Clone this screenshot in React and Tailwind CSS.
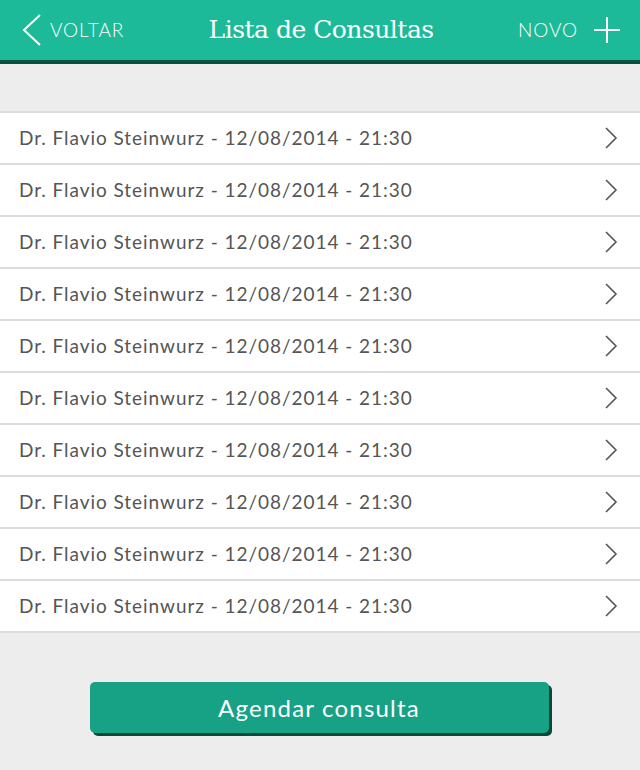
import React from 'react';

const consultas = Array.from({ length: 10 }, (_, i) => ({
  id: i + 1,
  doctor: 'Dr. Flavio Steinwurz',
  date: '12/08/2014',
  time: '21:30',
}));

function ChevronRight() {
  return (
    <svg width="14" height="22" viewBox="0 0 14 22" fill="none" stroke="#555" strokeWidth="1.6">
      <path d="M2 1l10 10L2 21" />
    </svg>
  );
}

export default function App() {
  return (
    <div className="min-h-[770px] bg-[#ededed] font-['Lato',sans-serif]">
      <header className="h-[60px] bg-[#1dba9a] border-b-4 border-[#0a5140] box-content flex items-center justify-between text-white">
        <button className="flex items-center gap-[8px] pl-[20px]">
          <svg width="22" height="32" viewBox="0 0 22 32" fill="none" stroke="white" strokeWidth="2">
            <path d="M20 1L4 16l16 15" />
          </svg>
          <span className="text-[19px] font-light tracking-[0.05em]">VOLTAR</span>
        </button>
        <h1 className="text-[25px] font-['DejaVu_Serif',serif] tracking-[-0.02em]">Lista de Consultas</h1>
        <button className="flex items-center gap-[16px] pr-[20px]">
          <span className="text-[19px] font-light tracking-[0.05em]">NOVO</span>
          <svg width="26" height="26" viewBox="0 0 26 26" stroke="white" strokeWidth="2">
            <path d="M13 0v26M0 13h26" />
          </svg>
        </button>
      </header>

      <div className="h-[47px]" />

      <ul className="border-t-2 border-[#dcdcdc] bg-white">
        {consultas.map(c => (
          <li key={c.id} className="h-[52px] border-b-2 border-[#dcdcdc] flex items-center justify-between pl-[19px] pr-[22px]">
            <span className="text-[19px] text-[#555] tracking-[0.05em]">{c.doctor} - {c.date} - {c.time}</span>
            <ChevronRight />
          </li>
        ))}
      </ul>

      <div className="flex justify-center pt-[49px] pr-[2px]">
        <button className="w-[459px] h-[51px] rounded-[5px] bg-[#17a185] text-white text-[24px] tracking-[0.05em] shadow-[3px_3px_0_#064a3a]">
          Agendar consulta
        </button>
      </div>
    </div>
  );
}
